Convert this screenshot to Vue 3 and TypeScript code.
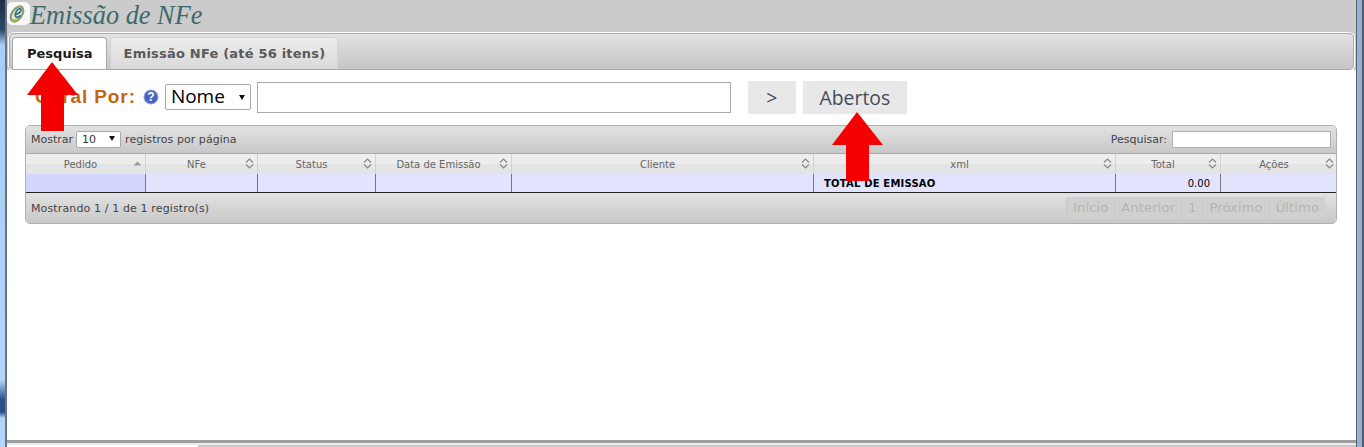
<script setup lang="ts">
interface Col { label: string; width: number; sort: 'both' | 'asc'; }
const cols: Col[] = [
  { label: 'Pedido', width: 120, sort: 'asc' },
  { label: 'NFe', width: 112, sort: 'both' },
  { label: 'Status', width: 118, sort: 'both' },
  { label: 'Data de Emissão', width: 136, sort: 'both' },
  { label: 'Cliente', width: 302, sort: 'both' },
  { label: 'xml', width: 302, sort: 'both' },
  { label: 'Total', width: 105, sort: 'both' },
  { label: 'Ações', width: 116, sort: 'both' },
];
const pages = ['Início', 'Anterior', '1', 'Próximo', 'Último'];
</script>

<template>
  <div class="screen">
    <div class="edge-left"></div>
    <main class="win">
      <header class="head">
        <svg class="logo" width="23" height="23" viewBox="0 0 23 23">
          <rect width="23" height="23" rx="5" fill="#f7f9f8" />
          <ellipse cx="10" cy="12" rx="5" ry="8.500" transform="rotate(35 10 12)" fill="#dfe6d8" stroke="#8f9c72" stroke-width="2.200" />
          <path d="M5 17c1 1.500 3 1.500 5 .5" fill="none" stroke="#b4c24a" stroke-width="2" />
          <path d="M7.500 12.500c3-.5 6-2.300 6.500-4.300.3-1.500-1.500-2-3-.8-2.500 2-3.500 6-2 7.500 1.200 1 3 0 4.500-1.500" fill="none" stroke="#2c6f86" stroke-width="1.600" />
        </svg>
        <h1>Emissão de NFe</h1>
      </header>

      <div class="tabs-wrap">
        <nav class="tabs">
          <a class="tab active">Pesquisa</a>
          <a class="tab">Emissão NFe (até 56 itens)</a>
        </nav>
      </div>

      <section class="content">
        <div class="filter">
          <label class="filter-label">Geral Por:</label>
          <svg class="help" width="16" height="16" viewBox="0 0 16 16">
            <circle cx="8" cy="8" r="7" fill="#4a62c4" stroke="#8f9fd8" />
            <text x="8" y="12" text-anchor="middle" class="help-q">?</text>
          </svg>
          <div class="fake-select">Nome<span class="caret big"></span></div>
          <input class="search" type="text" />
          <button class="btn go">&gt;</button>
          <button class="btn open">Abertos</button>
        </div>

        <div class="table-box">
          <div class="toolbar top">
            <div class="length">
              Mostrar
              <span class="mini-select">10<span class="caret"></span></span>
              <span class="per-page">registros por página</span>
            </div>
            <div class="find">Pesquisar: <input type="text" /></div>
          </div>

          <div class="thead">
            <div v-for="c in cols" :key="c.label" class="th" :style="{ width: c.width + 'px' }">
              <span>{{ c.label }}</span>
              <svg v-if="c.sort === 'both'" class="sort" width="9" height="11" viewBox="0 0 9 11">
                <path d="M1 4.500 4.500 1 8 4.500M1 6.500 4.500 10 8 6.500" fill="none" stroke="#8a8a8a" stroke-width="1.200" />
              </svg>
              <svg v-else class="sort" width="9" height="11" viewBox="0 0 9 11">
                <path d="M.5 7.500 4.500 3.500 8.500 7.500Z" fill="#999" />
              </svg>
            </div>
          </div>

          <div class="tbody">
            <div v-for="(c, i) in cols" :key="c.label" class="td" :class="{ first: i === 0 }" :style="{ width: c.width + 'px' }">
              <b v-if="c.label === 'xml'">TOTAL DE EMISSAO</b>
              <span v-else-if="c.label === 'Total'" class="num">0.00</span>
            </div>
          </div>

          <div class="toolbar bottom">
            <div class="info">Mostrando 1 / 1 de 1 registro(s)</div>
            <div class="pager">
              <span v-for="p in pages" :key="p" class="page">{{ p }}</span>
            </div>
          </div>
        </div>
      </section>

      <div class="foot">
        <div class="foot-tab"></div>
      </div>
    </main>
    <div class="edge-right"></div>

    <svg class="arrow a1" width="54" height="70" viewBox="0 0 54 70">
      <path d="M26 0 52 33H38V69H15V33H1Z" fill="#f50000" />
    </svg>
    <svg class="arrow a2" width="54" height="70" viewBox="0 0 54 70">
      <path d="M26 0 52 33H38V69H15V33H1Z" fill="#f50000" />
    </svg>
  </div>
</template>

<style>
html, body { margin: 0; padding: 0; background: #fff; overflow: hidden; }
</style>

<style scoped>
.screen {
  position: relative;
  display: flex;
  width: 1364px;
  height: 447px;
  overflow: hidden;
  font-family: "DejaVu Sans", sans-serif;
  color: #444;
}
.edge-left {
  width: 5px;
  background: linear-gradient(#1d2f45 0, #2c4a66 30px, #a9cdf5 45px, #b4d4fb 380px, #2a4d86 400px, #2a4d86 412px, #b4d4fb 418px);
  border-right: 2px solid #6a7480;
}
.edge-right {
  width: 8px;
  background: #93b2d6;
  border-left: 1px solid #55606c;
  border-right: 2px solid #4d5a68;
  box-sizing: border-box;
}
.win {
  width: 1349px;
  height: 447px;
  display: flex;
  flex-direction: column;
  background: #fff;
}
.head {
  height: 33px;
  flex: none;
  background: #cbcbcb;
  display: flex;
  align-items: flex-start;
}
.logo { flex: none; margin: 2px 0 0 0; }
h1 {
  margin: 1px 0 0 0;
  font: italic 400 26.300px/30px "Liberation Serif", serif;
  color: #3c6a6c;
}
.tabs-wrap {
  flex: none;
  background: #cbcbcb;
  padding-right: 2px;
  padding-left: 2px;
}
.tabs {
  height: 35px;
  display: flex;
  align-items: flex-end;
  gap: 3px;
  padding-left: 2px;
  border: 1px solid #aaa;
  border-radius: 5px;
  background: linear-gradient(#e2e2e2, #c6c6c6);
  box-shadow: 0 0 0 1px #fff;
}
.tab {
  height: 32px;
  box-sizing: border-box;
  border: 1px solid #d4d4d4;
  border-bottom: 0;
  border-radius: 4px 4px 0 0;
  padding: 0 12px 0 13px;
  font: 700 13px/31px "DejaVu Sans", sans-serif;
  letter-spacing: .2px;
  color: #5a5a5a;
  background: linear-gradient(#ededed, #d9d9d9);
}
.tab.active {
  color: #1c1c1c;
  background: #fff;
  border-color: #aaa;
  padding: 0 13px 0 14px;
  letter-spacing: 0;
}
.content { flex: 1; padding: 10px 18px 0 18px; min-height: 0; }
.filter { display: flex; align-items: center; height: 34px; margin-bottom: 11px; }
.filter-label {
  margin-left: 10px;
  font: 700 19px/34px "Liberation Sans", sans-serif;
  color: #c8650f;
  letter-spacing: .9px;
}
.help { margin: 0 6px 0 7px; flex: none; }
.help-q { font: 700 12px "Liberation Sans", sans-serif; fill: #fff; }
.fake-select {
  width: 86px;
  height: 26px;
  box-sizing: border-box;
  border: 1px solid #a9a9a9;
  border-radius: 2px;
  padding-left: 5px;
  font: 19px/23px "Open Sans", sans-serif;
  color: #000;
  position: relative;
  background: #fff;
  margin-right: 6px;
}
.caret {
  position: absolute;
  right: 5px;
  top: 8px;
  width: 0;
  height: 0;
  border-left: 3.500px solid transparent;
  border-right: 3.500px solid transparent;
  border-top: 5px solid #111;
}
.caret.big { right: 5px; top: 10px; }
.search {
  width: 474px;
  height: 31px;
  box-sizing: border-box;
  border: 1px solid #a9a9a9;
  margin: 0 17px 0 0;
  padding: 0;
}
.btn {
  height: 33px;
  border: 0;
  padding: 0;
  background: #e8e8e8;
  color: #444c5a;
  font: 19.400px/33px "Open Sans", sans-serif;
}
.go { width: 48px; margin-right: 7px; }
.open { width: 104px; }
.table-box {
  width: 1312px;
  box-sizing: border-box;
  border: 1px solid #b0b0b0;
  border-radius: 5px;
  overflow: hidden;
}
.toolbar {
  display: flex;
  justify-content: space-between;
  align-items: center;
  background: linear-gradient(#e2e2e2, #c8c8c8);
  padding: 0 5px;
  font-size: 11px;
  color: #444;
}
.toolbar.top { height: 27px; }
.toolbar.bottom { height: 30px; }
.length { display: flex; align-items: center; gap: 3px; }
.per-page { margin-left: 1px; letter-spacing: .05px; }
.mini-select {
  position: relative;
  display: block;
  width: 45px;
  height: 17px;
  box-sizing: border-box;
  border: 1px solid #a9a9a9;
  border-radius: 2px;
  background: #fff;
  padding-left: 5px;
  line-height: 15px;
  color: #333;
}
.mini-select .caret { top: 4px; right: 5px; }
.find { display: flex; align-items: center; gap: 5px; }
.find input {
  width: 159px;
  height: 17px;
  box-sizing: border-box;
  border: 1px solid #b0b0b0;
  padding: 0;
  margin: 0;
}
.thead { display: flex; height: 20px; border-top: 1px solid #aaa; }
.th {
  flex: none;
  position: relative;
  box-sizing: border-box;
  border-right: 1px solid #d2d2d2;
  padding-right: 10px;
  text-align: center;
  font-size: 10px;
  line-height: 21px;
  color: #666;
  background: linear-gradient(#ededed 50%, #e4e4e4 50%);
}
.th:last-child { border-right: 0; }
.sort { position: absolute; right: 3px; top: 4px; }
.tbody {
  display: flex;
  height: 18px;
  border-bottom: 1px solid #222;
  box-sizing: content-box;
}
.td {
  flex: none;
  box-sizing: border-box;
  border-right: 1px solid #777;
  background: #e2e4ff;
  font-size: 10px;
  line-height: 19px;
  padding: 0 10px;
  color: #000;
  white-space: nowrap;
  letter-spacing: .2px;
}
.td:last-child { border-right: 0; }
.td.first { background: #d3d6ff; }
.num { display: block; text-align: right; letter-spacing: 0; }
.info { letter-spacing: .13px; }
.pager { display: flex; margin-right: 6px; gap: 0; }
.page {
  padding: 0 6px;
  height: 22px;
  line-height: 22px;
  font-size: 13px;
  letter-spacing: .15px;
  color: #b4b4b4;
  background: #d0d0d0;
  border-left: 1px solid #cacaca;
}
.foot {
  margin-top: auto;
  height: 7px;
  flex: none;
  border-top: 3px solid #9e9e9e;
  background: #ececec;
  box-sizing: border-box;
  padding-top: 2px;
}
.foot-tab {
  height: 2px;
  background: linear-gradient(to right, #fff 191px, #c9c9c9 191px);
}
.arrow { position: absolute; pointer-events: none; }
.a1 { left: 26px; top: 62px; }
.a2 { left: 831px; top: 112px; }
</style>
